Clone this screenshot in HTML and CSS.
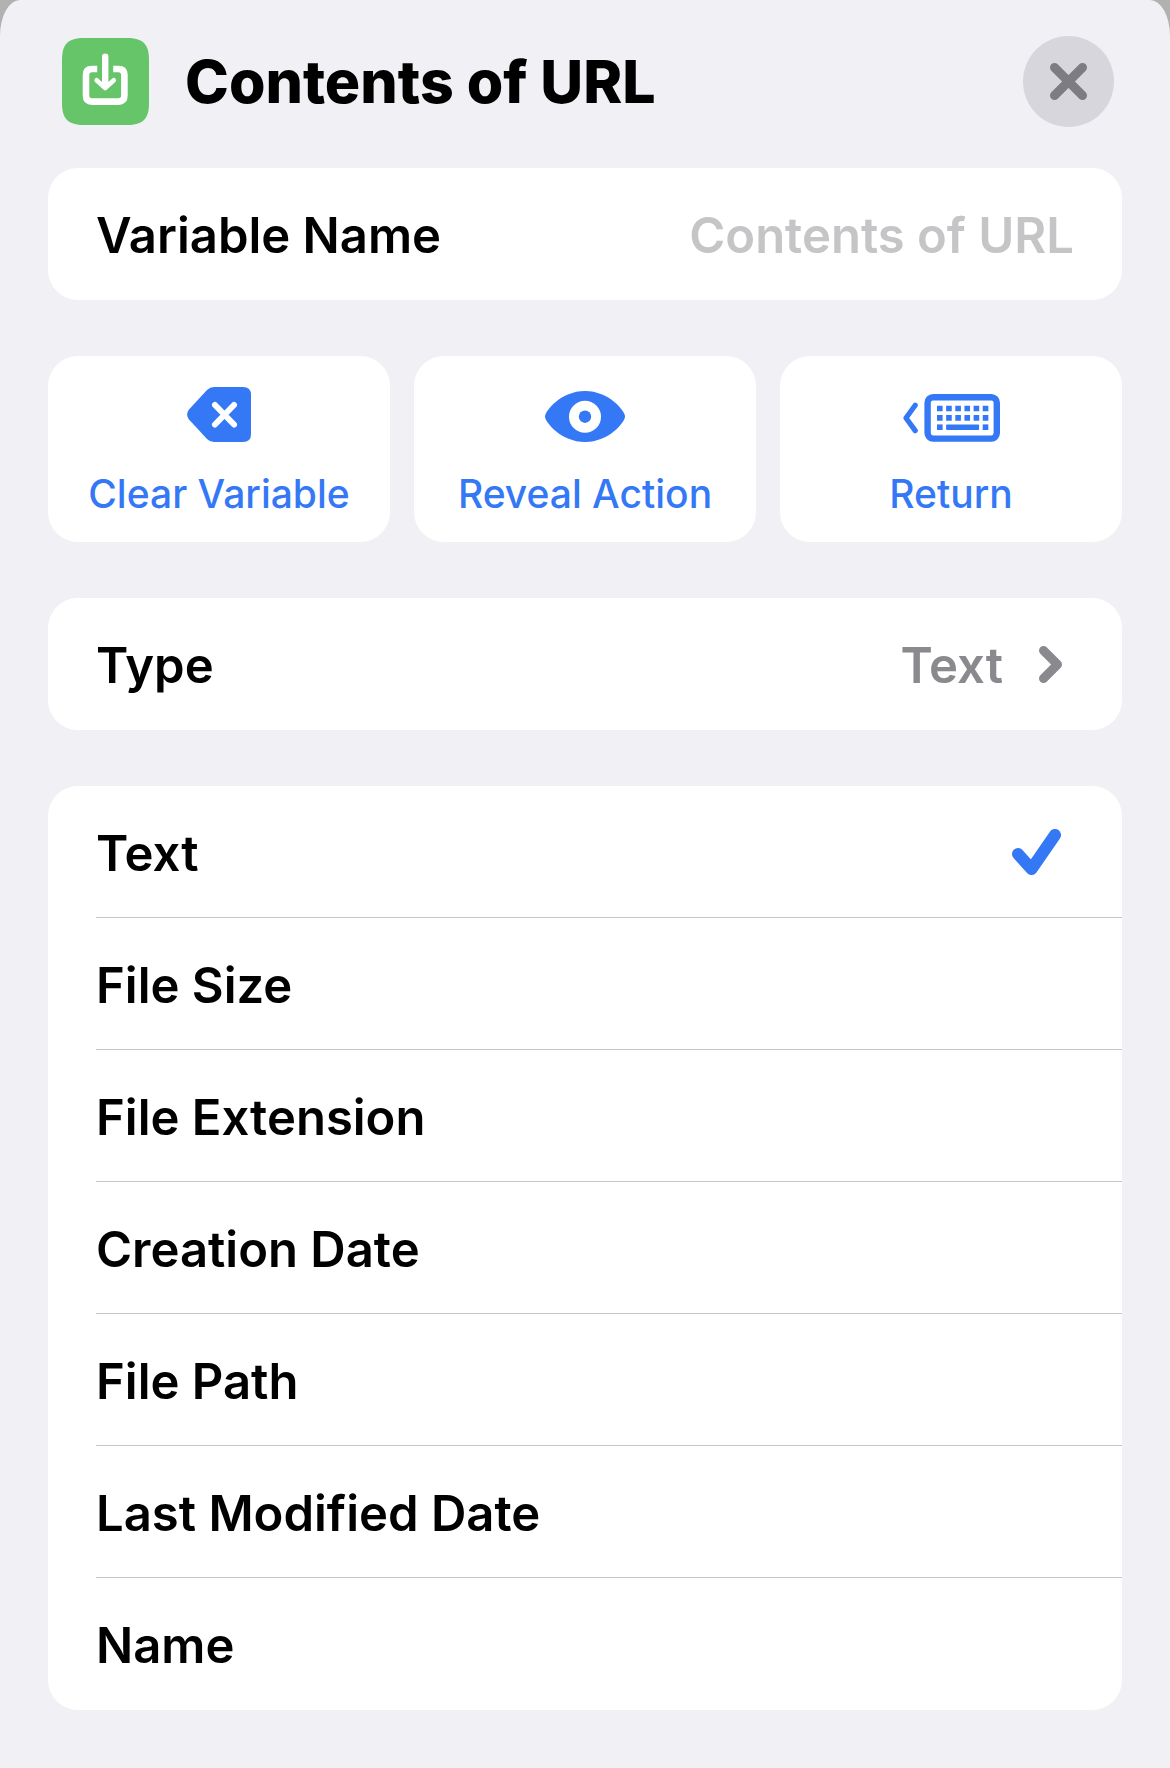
FILE: index.html
```html
<!DOCTYPE html>
<html lang="en">
<head>
<meta charset="utf-8">
<meta name="viewport" content="width=device-width, initial-scale=1">
<title>Contents of URL</title>
<link rel="stylesheet" href="styles.css">
</head>
<body>
<main class="sheet">
  <header class="header">
    <svg class="app-icon" viewBox="0 0 87 87" aria-hidden="true">
      <path class="app-icon-bg" d="M22 0H65C81 0 87 6 87 22V65C87 81 81 87 65 87H22C6 87 0 81 0 65V22C0 6 6 0 22 0Z"/>
      <g fill="none" stroke="#fff">
        <path stroke-width="6.600" d="M35.200 31H30Q24 31 24 37V57.600Q24 63.600 30 63.600H56.400Q62.400 63.600 62.400 57.600V37Q62.400 31 56.400 31H51.200"/>
        <path stroke-width="6.400" stroke-linecap="round" d="M43.200 18.600V46"/>
        <path stroke-width="4.600" stroke-linecap="round" stroke-linejoin="round" d="M34.600 42.200L43.200 50L51.800 42.200"/>
      </g>
    </svg>
    <h1 class="title">Contents of URL</h1>
    <button class="close" type="button" aria-label="Close">
      <svg class="close-icon" viewBox="0 0 37 37" aria-hidden="true"><path d="M4.500 4.500L32.500 32.500M32.500 4.500L4.500 32.500"/></svg>
    </button>
  </header>

  <div class="card row">
    <label class="text" for="variable-name">Variable Name</label>
    <input class="name-field" id="variable-name" type="text" placeholder="Contents of URL">
  </div>

  <div class="actions">
    <button class="card action" type="button">
      <svg class="icon-clear" viewBox="0 0 64 55" aria-hidden="true">
        <path fill="currentColor" d="M27 0H56Q64 0 64 8V47Q64 55 56 55H27Q23 55 20 52L2 32.500Q-1.800 27.500 2 22.500L20 3Q23 0 27 0Z"/>
        <path fill="none" stroke="#fff" stroke-width="6" stroke-linecap="round" d="M28 18L47 37.500M47 18L28 37.500"/>
      </svg>
      <span>Clear Variable</span>
    </button>
    <button class="card action" type="button">
      <svg class="icon-eye" viewBox="0 0 80 51" aria-hidden="true">
        <path fill="currentColor" d="M0 25.500C0 20 16 0 40 0S80 20 80 25.500S64 51 40 51S0 31 0 25.500Z"/>
        <circle cx="40" cy="25.700" r="16" fill="#fff"/>
        <circle cx="40" cy="25.700" r="6.200" fill="currentColor"/>
      </svg>
      <span>Reveal Action</span>
    </button>
    <button class="card action" type="button">
      <svg class="icon-keyboard" viewBox="0 0 97 48" aria-hidden="true">
        <g fill="none" stroke="currentColor">
          <path stroke-width="5.200" stroke-linecap="round" stroke-linejoin="round" d="M12.200 11.200L3 24L12.200 36.600"/>
          <rect x="24.600" y="3.200" width="69.200" height="41.400" rx="5.500" stroke-width="6.400"/>
          <path stroke-width="5.600" stroke-dasharray="5.600 3.550" d="M34 14.500H85.400M34 23.900H85.400"/>
        </g>
        <g fill="currentColor">
          <rect x="34" y="30.400" width="5.600" height="5.600"/>
          <rect x="43.100" y="30.400" width="33" height="5.600" rx="1"/>
          <rect x="79.700" y="30.400" width="5.600" height="5.600"/>
        </g>
      </svg>
      <span>Return</span>
    </button>
  </div>

  <button class="card row type-row" type="button">
    <span class="text">Type</span>
    <span class="type-value">
      <span class="text">Text</span>
      <svg class="chevron" viewBox="0 0 23 37" aria-hidden="true"><path d="M4.500 4.500L18.500 18.500L4.500 32.500"/></svg>
    </span>
  </button>

  <div class="card options" role="radiogroup" aria-label="Property">
    <label class="option"><span class="text">Text</span><input type="radio" name="property" checked><svg class="check" viewBox="0 0 49 46" aria-hidden="true"><path d="M6 25L19.500 40L43 6"/></svg></label>
    <label class="option"><span class="text">File Size</span><input type="radio" name="property"><svg class="check" viewBox="0 0 49 46" aria-hidden="true"><path d="M6 25L19.500 40L43 6"/></svg></label>
    <label class="option"><span class="text">File Extension</span><input type="radio" name="property"><svg class="check" viewBox="0 0 49 46" aria-hidden="true"><path d="M6 25L19.500 40L43 6"/></svg></label>
    <label class="option"><span class="text">Creation Date</span><input type="radio" name="property"><svg class="check" viewBox="0 0 49 46" aria-hidden="true"><path d="M6 25L19.500 40L43 6"/></svg></label>
    <label class="option"><span class="text">File Path</span><input type="radio" name="property"><svg class="check" viewBox="0 0 49 46" aria-hidden="true"><path d="M6 25L19.500 40L43 6"/></svg></label>
    <label class="option"><span class="text">Last Modified Date</span><input type="radio" name="property"><svg class="check" viewBox="0 0 49 46" aria-hidden="true"><path d="M6 25L19.500 40L43 6"/></svg></label>
    <label class="option"><span class="text">Name</span><input type="radio" name="property"><svg class="check" viewBox="0 0 49 46" aria-hidden="true"><path d="M6 25L19.500 40L43 6"/></svg></label>
  </div>
</main>
</body>
</html>
```

FILE: styles.css
```css
* {
  box-sizing: border-box;
}

html {
  background: #b1b2b0;
}

body {
  margin: 0;
  font-family: Inter, "Liberation Sans", sans-serif;
  font-size: 49px;
  font-weight: 600;
  line-height: 60px;
  color: #000;
}

button,
input {
  margin: 0;
  padding: 0;
  border: 0;
  background: none;
  font: inherit;
  color: inherit;
}

svg {
  display: block;
  flex: none;
}

.sheet {
  display: flex;
  flex-direction: column;
  gap: 56px;
  min-height: 100vh;
  padding: 36px 48px 56px;
  background: #f1f0f5;
  border-radius: 20px 20px 0 0 / 36px 36px 0 0;
}

.header {
  display: flex;
  align-items: center;
  margin-bottom: -15px;
  padding: 0 8px 0 14px;
}

.app-icon {
  width: 87px;
  height: 87px;
}

.app-icon-bg {
  fill: #66c568;
}

.title {
  flex: 1;
  margin: 0 0 0 36px;
  font-size: 59px;
  font-weight: 800;
  line-height: 72px;
}

.close {
  display: grid;
  place-items: center;
  width: 91px;
  height: 91px;
  border-radius: 50%;
  background: #d7d6dc;
}

.close-icon {
  width: 37px;
  height: 37px;
  fill: none;
  stroke: #7d7c82;
  stroke-width: 9;
  stroke-linecap: round;
}

.card {
  border-radius: 30px;
  background: #fff;
}

.text {
  padding-top: 4px;
}

.row {
  display: flex;
  align-items: center;
  justify-content: space-between;
  min-height: 132px;
  padding: 0 48px;
}

.name-field {
  flex: 1;
  min-width: 0;
  height: 64px;
  padding-top: 2px;
  text-align: right;
}

.name-field::placeholder {
  color: #c5c5c7;
  opacity: 1;
}

.actions {
  display: grid;
  grid-template-columns: repeat(3, 1fr);
  gap: 24px;
}

.action {
  display: flex;
  flex-direction: column;
  align-items: center;
  justify-content: flex-end;
  gap: 28px;
  min-height: 186px;
  padding: 24px 0;
  color: #3478f6;
  font-size: 39px;
  font-weight: 500;
  line-height: 48px;
}

.icon-clear {
  width: 64px;
  height: 55px;
}

.icon-eye {
  width: 80px;
  height: 51px;
}

.icon-keyboard {
  width: 97px;
  height: 48px;
}

.type-row {
  padding-right: 60px;
}

.type-value {
  display: flex;
  align-items: center;
  gap: 36px;
  color: #8a8a8e;
}

.chevron {
  width: 23px;
  height: 37px;
  fill: none;
  stroke: #8a8a8e;
  stroke-width: 9;
  stroke-linecap: round;
  stroke-linejoin: round;
}

.options {
  padding-left: 48px;
}

.option {
  display: flex;
  align-items: center;
  height: 132px;
  padding-right: 61px;
  border-bottom: 1px solid #c6c6c8;
}

.option:last-child {
  border-bottom: 0;
}

.option .text {
  flex: 1;
}

.option input {
  appearance: none;
  width: 0;
  height: 0;
}

.check {
  visibility: hidden;
  width: 49px;
  height: 46px;
  fill: none;
  stroke: #3478f6;
  stroke-width: 12;
  stroke-linecap: round;
  stroke-linejoin: round;
}

.option input:checked + .check {
  visibility: visible;
}
```
